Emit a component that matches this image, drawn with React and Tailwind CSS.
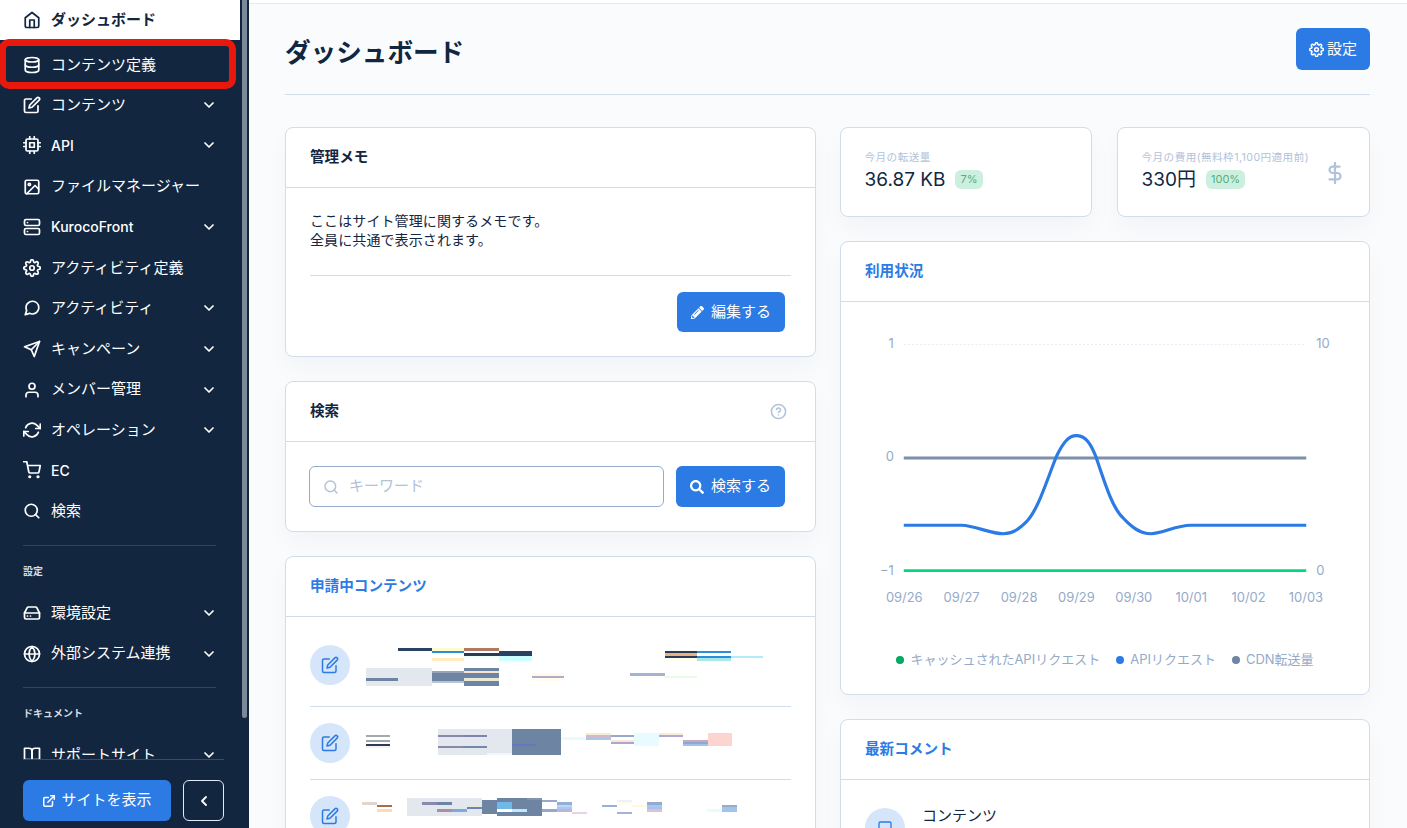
import React from "react";
import {
  FiBookOpen, FiChevronDown, FiChevronLeft, FiCpu, FiDatabase, FiDollarSign, FiEdit, FiExternalLink,
  FiGlobe, FiHardDrive, FiHelpCircle, FiHome, FiImage, FiMessageSquare, FiMessageCircle, FiRefreshCw,
  FiSearch, FiSend, FiServer, FiSettings, FiShoppingCart, FiUser,
} from "react-icons/fi";
import { FaPencilAlt, FaSearch } from "react-icons/fa";

const menu = [
  { icon: FiDatabase, label: "コンテンツ定義" },
  { icon: FiEdit, label: "コンテンツ", more: true },
  { icon: FiCpu, label: "API", more: true, latin: true },
  { icon: FiImage, label: "ファイルマネージャー" },
  { icon: FiServer, label: "KurocoFront", more: true, latin: true },
  { icon: FiSettings, label: "アクティビティ定義" },
  { icon: FiMessageCircle, label: "アクティビティ", more: true },
  { icon: FiSend, label: "キャンペーン", more: true },
  { icon: FiUser, label: "メンバー管理", more: true },
  { icon: FiRefreshCw, label: "オペレーション", more: true },
  { icon: FiShoppingCart, label: "EC", latin: true },
  { icon: FiSearch, label: "検索" },
];

// pixelated blocks of the blurred list titles: x, y, w, h, colour (3x crop coordinates)
const row1 = [
  [320,84,100,9,"#2b4160"],[420,84,95,9,"#fffbd0"],[420,93,95,6,"#2a8fd6"],[420,114,95,9,"#ffeebb"],
  [515,84,103,9,"#b07a5e"],[515,99,103,9,"#2b3a55"],[515,108,103,6,"#f0fff8"],[618,93,98,15,"#2b4160"],[618,108,98,15,"#ccffff"],
  [1109,93,95,7,"#2b3a55"],[1109,99,95,9,"#e8b27c"],[1109,108,95,6,"#2b3a55"],[1109,114,95,9,"#fffff0"],
  [1204,93,101,7,"#2a8fd6"],[1204,108,101,6,"#2a8fd6"],[1204,114,101,9,"#a8e8e8"],[1305,108,94,6,"#b0ecfa"],
  [225,144,195,54,"#e3e7ee"],[225,174,95,9,"#6e84a3"],[420,153,95,7,"#93a4ba"],[420,159,95,24,"#6e84a3"],[420,183,95,6,"#b8c4d4"],
  [515,144,103,9,"#6e84a3"],[515,153,103,6,"#f8e4d4"],[515,159,103,15,"#6e84a3"],[515,174,103,9,"#e8ead8"],[515,183,103,15,"#6e84a3"],
  [716,159,95,9,"#fffbe8"],[716,168,95,6,"#b8a8c8"],[716,174,95,9,"#fffdf0"],[1006,159,103,9,"#a4b4d0"],[1109,168,95,6,"#e8fbe8"],
];
const row2 = [
  [225,345,71,6,"#a8a8b0"],[225,360,71,6,"#98a8a0"],[225,372,71,7,"#2b3a55"],[225,379,71,5,"#f8eef4"],
  [438,327,219,78,"#e3e7ee"],[438,345,75,6,"#8c88a8"],[513,345,70,6,"#8084a8"],[438,378,75,6,"#8c88a8"],[513,378,70,6,"#7488a8"],[583,399,74,6,"#f4f5f8"],
  [657,327,145,78,"#6e84a3"],[657,372,71,6,"#6478c0"],[802,351,74,8,"#e8fcfc"],
  [876,339,74,6,"#f8ecd8"],[876,345,74,6,"#d8b8c8"],[876,351,74,9,"#a8c8e8"],
  [950,345,68,6,"#98a8c8"],[950,360,68,6,"#fce4d8"],[950,366,68,6,"#a8a8d0"],[1018,339,74,39,"#e8fcff"],
  [1092,339,71,6,"#f8ecd8"],[1092,345,71,6,"#b0a8d0"],[1163,360,74,6,"#c8a8c0"],[1163,366,74,6,"#90a8d0"],[1163,372,74,6,"#a0c4e8"],[1237,339,71,39,"#fdd5d0"],
];
const row3 = [
  [213,546,44,9,"#e4d4cc"],[257,555,45,6,"#a86c50"],[257,567,45,9,"#fadcb0"],
  [346,534,222,54,"#e3e7ee"],[391,546,44,9,"#8888b0"],[435,546,44,9,"#6e84a3"],[435,567,44,9,"#a890a0"],[479,567,45,9,"#80a8d8"],[524,555,44,6,"#e8e8d8"],[524,561,44,6,"#6e84b8"],
  [568,540,44,42,"#6e84a3"],[612,534,134,54,"#6e84a3"],[612,546,45,21,"#70b8e8"],[612,567,45,9,"#ffffff"],[657,567,44,9,"#c0e8fc"],[701,534,45,6,"#8294ae"],
  [746,540,44,6,"#98a8c8"],[746,567,44,9,"#98a8c8"],[790,546,44,9,"#90b0d8"],[790,555,44,6,"#b8d8f8"],[790,561,44,6,"#a8c8f0"],[790,567,44,9,"#c0b4d0"],[834,576,45,6,"#e4d4e4"],
  [923,555,44,6,"#98b0d8"],[967,540,45,6,"#f0f0fc"],[967,546,45,9,"#fffdf0"],[967,576,45,6,"#a8b0d8"],[1012,555,44,6,"#fff8e0"],
  [1056,546,45,9,"#98a8d0"],[1056,555,45,6,"#a8c8f0"],[1056,561,45,6,"#a0c4f0"],[1056,567,45,9,"#e0c0d0"],
  [1233,567,45,9,"#e8fcfc"],[1278,555,44,6,"#98acc8"],[1278,561,44,15,"#a0c4ec"],
];

const MenuRow = ({ icon: Icon, label, more, latin }) => (
  <div className={`flex h-[40.6px] items-center pl-[23px] pr-[32px] text-white ${latin ? "text-[14px] font-medium" : "pt-px text-[15px]"}`}>
    <Icon className="h-[18px] w-[18px] shrink-0" strokeWidth={2.3} />
    <span className="ml-[10px] flex-1 whitespace-nowrap">{label}</span>
    {more && <FiChevronDown className="h-[16px] w-[16px] shrink-0" strokeWidth={2.6} />}
  </div>
);

const Sidebar = () => (
  <aside className="relative flex h-[828px] w-[249px] shrink-0 flex-col bg-[#12263f]">
    <div className="h-[759px] overflow-hidden">
      <div className="flex h-[40px] w-[240px] items-center bg-white pl-[23px] text-[15px] font-semibold text-[#12263f]">
        <FiHome className="h-[18px] w-[18px]" strokeWidth={2.3} />
        <span className="ml-[10px]">ダッシュボード</span>
      </div>
      <div className="mt-[4px]">
        {menu.map((m) => <MenuRow key={m.label} {...m} />)}
      </div>
      <div className="ml-[23px] mt-[14px] h-px w-[193px] bg-[#334559]" />
      <div className="flex h-[46px] items-center pl-[23px] pt-[4px] text-[10px] font-semibold text-[#d5dce6]">設定</div>
      <MenuRow icon={FiHardDrive} label="環境設定" more />
      <MenuRow icon={FiGlobe} label="外部システム連携" more />
      <div className="ml-[23px] mt-[14px] h-px w-[193px] bg-[#334559]" />
      <div className="flex h-[46px] items-center pl-[23px] pt-[4px] text-[10px] font-semibold text-[#d5dce6]">ドキュメント</div>
      <MenuRow icon={FiBookOpen} label="サポートサイト" more />
    </div>
    <div className="mx-[23px] h-px w-[201px] bg-[#3a4c63]" />
    <div className="flex gap-[12px] pl-[23px] pt-[20px]">
      <button className="flex h-[41px] w-[148px] items-center justify-center gap-[5px] rounded-[6px] bg-[#2c7be5] text-[15px] text-white">
        <FiExternalLink className="h-[14px] w-[14px]" strokeWidth={2.6} />
        サイトを表示
      </button>
      <button className="flex h-[41px] w-[41px] items-center justify-center rounded-[6px] border border-[#e3ebf6] text-white">
        <FiChevronLeft className="h-[16px] w-[16px]" strokeWidth={2.8} />
      </button>
    </div>
    {/* scrollbar */}
    <div className="absolute left-[242px] top-0 h-[718px] w-[5px] rounded-b-[3px] bg-[#7d8899]" />
  </aside>
);

const Card = ({ title, blue, right, children, className = "" }) => (
  <section className={`overflow-hidden rounded-[8px] border border-[#d2ddec] bg-white shadow-[0_12px_24px_rgba(18,38,63,0.03)] ${className}`}>
    <div className="flex h-[60px] items-center justify-between border-b border-[#d2ddec] px-[24px]">
      <h2 className={`text-[14.6px] font-semibold ${blue ? "text-[#2c7be5]" : "text-[#12263f]"}`}>{title}</h2>
      {right}
    </div>
    {children}
  </section>
);

const BlueButton = ({ icon, children, className = "" }) => (
  <button className={`flex items-center justify-center gap-[7px] rounded-[6px] bg-[#2c7be5] text-[15px] text-white ${className}`}>
    {icon}
    {children}
  </button>
);

const Stat = ({ label, value, pct, icon }) => (
  <div className="flex h-[90px] items-center justify-between rounded-[8px] border border-[#d2ddec] bg-white pl-[23.5px] pr-[23px] shadow-[0_12px_24px_rgba(18,38,63,0.03)]">
    <div className="pb-[2px]">
      <div className="whitespace-nowrap text-[10.6px] leading-[14px] tracking-[0.45px] text-[#b1c2d9]">{label}</div>
      <div className="mt-[3px] flex items-center gap-[10px]">
        <span className="text-[19px] leading-[24px] text-[#12263f]">{value}</span>
        <span className="flex h-[19px] items-center rounded-[6px] bg-[#ccf0dd] px-[5px] text-[11px] text-[#55ad82]">{pct}</span>
      </div>
    </div>
    {icon}
  </div>
);

const Blocks = ({ rects, cy }) => (
  <svg viewBox={`213 ${cy - 60} 1186 120`} preserveAspectRatio="none" className="h-[40px] w-[401px] shrink-0 overflow-visible" shapeRendering="crispEdges">
    {rects.map(([x, y, w, h, c], i) => <rect key={i} x={x} y={y} width={w} height={h} fill={c} />)}
  </svg>
);

const EditBadge = () => (
  <div className="flex h-[40px] w-[40px] shrink-0 items-center justify-center rounded-full bg-[#d5e5fa] text-[#2c7be5]">
    <FiEdit className="h-[18px] w-[18px]" />
  </div>
);

const Chart = () => {
  const dates = ["09/26", "09/27", "09/28", "09/29", "09/30", "10/01", "10/02", "10/03"];
  const blue = "M63 222.5 C80 222.5 105 222.5 121 222.5 C135 223 150 231 163 231 C172 231 178 227 187 218 C198 206 206 179 216 154 C223 139 229 132 237 132.5 C246 133 251 141 256 154 C265 181 273 206 283 215 C293 226 301 231 311 231 C323 231 336 222.5 351 222.5 C390 222.5 430 222.5 467 222.5";
  return (
    <svg viewBox="0 0 530 320" className="block h-[320px] w-full">
      <line x1="63" x2="467" y1="41" y2="41" stroke="#e3ebf6" strokeDasharray="2 2" />
      <line x1="63" x2="467" y1="155" y2="155" stroke="#6e84a3" strokeOpacity="0.9" strokeWidth="3" />
      <path d={blue} fill="none" stroke="#2c7be5" strokeWidth="3.2" />
      <line x1="63" x2="467" y1="268" y2="268" stroke="#00d97e" strokeWidth="2.8" />
      <g fill="#95aac9" fontSize="13">
        <text x="53" y="45" textAnchor="end">1</text>
        <text x="53" y="158" textAnchor="end">0</text>
        <text x="53" y="272" textAnchor="end">−1</text>
        <text x="477" y="45">10</text>
        <text x="477" y="272">0</text>
        {dates.map((d, i) => <text key={d} x={63.5 + i * 57.6} y="300" textAnchor="middle">{d}</text>)}
      </g>
    </svg>
  );
};

const Legend = ({ color, children }) => (
  <span className="flex items-center gap-[6px] whitespace-nowrap">
    <i className={`h-[8px] w-[8px] rounded-full ${color}`} />
    {children}
  </span>
);

export default function App() {
  return (
    <div className="relative flex h-[828px] overflow-hidden bg-[#f9fbfd] font-['Inter','Noto_Sans_CJK_JP',sans-serif]">
      <Sidebar />

      <main className="min-w-0 flex-1">
        <div className="h-[4px] border-b border-[#e3ebf6] bg-white" />
        <div className="pl-[36px] pr-[37px]">
          <div className="flex items-start justify-between border-b border-[#d2ddec] pb-[24px] pt-[24px]">
            <h1 className="h-[42px] text-[25.6px] font-semibold leading-[50px] text-[#12263f]">ダッシュボード</h1>
            <BlueButton icon={<FiSettings className="h-[15px] w-[15px]" strokeWidth={2.4} />} className="h-[42px] w-[74px] !gap-[3px]">設定</BlueButton>
          </div>

          <div className="mt-[32px] flex gap-[24px]">
            <div className="flex w-[531px] shrink-0 flex-col gap-[24px]">
              <Card title="管理メモ">
                <div className="px-[24px] pb-[24px] pt-[23px]">
                  <p className="h-[39px] text-[14px] leading-[19px] tracking-[0.1px] text-[#12263f]">
                    ここはサイト管理に関するメモです。<br />全員に共通で表示されます。
                  </p>
                  <div className="mt-[25px] border-t border-[#d2ddec] pr-[6px] pt-[16px]">
                    <BlueButton icon={<FaPencilAlt className="h-[13px] w-[13px]" />} className="ml-auto h-[40px] w-[108px]">編集する</BlueButton>
                  </div>
                </div>
              </Card>

              <Card title="検索" right={<FiHelpCircle className="mr-[4px] h-[17px] w-[17px] text-[#b1c2d9]" strokeWidth={2.2} />}>
                <div className="flex gap-[12px] py-[24px] pl-[23px] pr-[30px]">
                  <div className="flex h-[41px] w-[355px] items-center rounded-[6px] border border-[#95aac9] pl-[13px] text-[15px] text-[#b1c2d9]">
                    <FiSearch className="h-[16px] w-[16px]" strokeWidth={2.2} />
                    <span className="ml-[10px]">キーワード</span>
                  </div>
                  <BlueButton icon={<FaSearch className="h-[14px] w-[14px]" />} className="h-[41px] w-[109px]">検索する</BlueButton>
                </div>
              </Card>

              <Card title="申請中コンテンツ" blue>
                <div className="px-[24px] pt-[28px]">
                  <div className="flex gap-[12px] border-b border-[#d2ddec] pb-[21px]">
                    <EditBadge />
                    <Blocks rects={row1} cy={135} />
                  </div>
                  <div className="flex gap-[12px] border-b border-[#d2ddec] py-[16px]">
                    <EditBadge />
                    <Blocks rects={row2} cy={369} />
                  </div>
                  <div className="flex gap-[12px] py-[16px]">
                    <EditBadge />
                    <Blocks rects={row3} cy={588} />
                  </div>
                </div>
              </Card>
            </div>

            <div className="flex min-w-0 flex-1 flex-col gap-[24px]">
              <div className="grid grid-cols-[252px_1fr] gap-[25px]">
                <Stat label="今月の転送量" value="36.87 KB" pct="7%" />
                <Stat
                  label="今月の費用(無料枠1,100円適用前)"
                  value="330円"
                  pct="100%"
                  icon={<FiDollarSign className="mt-[2px] h-[22px] w-[22px] shrink-0 text-[#b1c2d9]" strokeWidth={2.4} />}
                />
              </div>

              <Card title="利用状況" blue>
                <div className="h-[392px] pt-px">
                  <Chart />
                  <div className="mt-[27px] flex justify-center gap-[16px] text-[13px] text-[#95aac9]">
                    <Legend color="bg-[#00a862]">キャッシュされたAPIリクエスト</Legend>
                    <Legend color="bg-[#2c7be5]">APIリクエスト</Legend>
                    <Legend color="bg-[#6e84a3]">CDN転送量</Legend>
                  </div>
                </div>
              </Card>

              <Card title="最新コメント" blue>
                <div className="flex gap-[17px] px-[24px] pt-[28px]">
                  <div className="flex h-[40px] w-[40px] shrink-0 items-center justify-center rounded-full bg-[#d5e5fa] text-[#2c7be5]">
                    <FiMessageSquare className="h-[16px] w-[16px]" />
                  </div>
                  <span className="text-[15px] leading-[16px] text-[#12263f]">コンテンツ</span>
                </div>
              </Card>
            </div>
          </div>
        </div>
      </main>

      {/* red annotation around the menu item */}
      <div className="absolute -left-px top-[39px] h-[50px] w-[237px] rounded-[10px] border-[7px] border-[#e8190c]" />
    </div>
  );
}
